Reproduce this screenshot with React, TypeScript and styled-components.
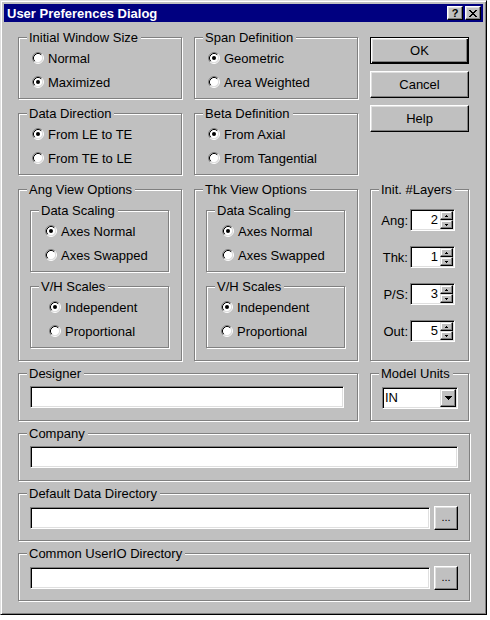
import styled, { createGlobalStyle } from "styled-components";

const GlobalStyle = createGlobalStyle`
  html, body {
    margin: 0;
    padding: 0;
    background: #fff;
  }
  body {
    font-family: "Liberation Sans", Arial, sans-serif;
    font-size: 13px;
    color: #000;
  }
`;

const Window = styled.div`
  width: 487px;
  box-sizing: border-box;
  background: #c0c0c0;
  border: 1px solid;
  border-color: #dfdfdf #000 #000 #dfdfdf;
  box-shadow: inset 1px 1px #fff, inset -1px -1px #808080;
  padding: 3px;
`;

const TitleBar = styled.div`
  height: 18px;
  background: #000080;
  display: flex;
  align-items: center;
  padding: 0 2px 0 3px;
  color: #fff;
`;

const TitleText = styled.span`
  font-weight: bold;
  font-size: 13px;
`;

const TitleButtons = styled.div`
  margin-left: auto;
  display: flex;
  gap: 2px;
`;

const TitleButton = styled.div`
  width: 16px;
  height: 14px;
  box-sizing: border-box;
  background: #c0c0c0;
  border: 1px solid;
  border-color: #fff #000 #000 #fff;
  box-shadow: inset -1px -1px #808080, inset 1px 1px #dfdfdf;
  display: flex;
  align-items: center;
  justify-content: center;
  color: #000;
  font-weight: bold;
  font-size: 11px;
  line-height: 1;
`;

const Body = styled.div`
  padding: 15px 13px 10px 14px;
  display: flex;
  flex-direction: column;
  gap: 12px;
`;

const TopGrid = styled.div`
  display: grid;
  grid-template-columns: 164px 164px 99px;
  grid-template-rows: 62px 62px 172px;
  column-gap: 12px;
  row-gap: 14px;
`;

const Frame = styled.div<{ $height?: number }>`
  border: 1px solid #808080;
  box-shadow: inset 1px 1px #fff, 1px 1px #fff;
  display: flex;
  flex-direction: column;
  min-width: 0;
  ${(p) => (p.$height ? `height: ${p.$height}px; box-sizing: border-box;` : "")}
`;

const InnerFrame = styled(Frame)<{ $top: number }>`
  margin: ${(p) => p.$top}px 12px 0 11px;
`;

const Caption = styled.div`
  align-self: flex-start;
  margin: -8px 0 0 8px;
  padding: 0 3px 0 2px;
  height: 15px;
  line-height: 15px;
  background: #c0c0c0;
  white-space: nowrap;
`;

const Options = styled.div`
  margin-top: 1px;
  display: flex;
  flex-direction: column;
`;

const Option = styled.div<{ $indent: number }>`
  display: flex;
  align-items: center;
  gap: 4px;
  height: 24px;
  padding-left: ${(p) => p.$indent}px;
  white-space: nowrap;
`;

const RadioSvg = styled.svg`
  display: block;
  flex-shrink: 0;
`;

const ButtonStack = styled.div`
  grid-row: span 2;
  align-self: start;
  display: flex;
  flex-direction: column;
  gap: 7px;
`;

const DialogButton = styled.div<{ $default?: boolean }>`
  height: 27px;
  box-sizing: border-box;
  display: flex;
  align-items: center;
  justify-content: center;
  border: 1px solid;
  border-color: ${(p) => (p.$default ? "#000" : "#fff #000 #000 #fff")};
  box-shadow: ${(p) =>
    p.$default
      ? "inset 1px 1px #fff, inset -1px -1px #000, inset -2px -2px #808080, inset 2px 2px #dfdfdf"
      : "inset -1px -1px #808080, inset 1px 1px #dfdfdf"};
`;

const SpinList = styled.div`
  margin-top: 12px;
  display: flex;
  flex-direction: column;
  gap: 15px;
`;

const SpinRow = styled.div`
  display: flex;
  align-items: center;
  justify-content: flex-end;
  gap: 2px;
  padding-right: 13px;
`;

const Sunken = styled.div`
  box-sizing: border-box;
  height: 22px;
  background: #fff;
  border: 1px solid;
  border-color: #808080 #fff #fff #808080;
  box-shadow: inset 1px 1px #000, inset -1px -1px #dfdfdf;
  padding: 1px;
  display: flex;
`;

const SpinBox = styled(Sunken)`
  width: 45px;
`;

const SpinValue = styled.div`
  flex: 1;
  text-align: right;
  line-height: 18px;
  padding-right: 2px;
`;

const SpinButtons = styled.div`
  width: 13px;
  display: flex;
  flex-direction: column;
`;

const SmallButton = styled.div`
  flex: 1;
  box-sizing: border-box;
  background: #c0c0c0;
  border: 1px solid;
  border-color: #dfdfdf #000 #000 #dfdfdf;
  box-shadow: inset -1px -1px #808080, inset 1px 1px #fff;
  display: flex;
  align-items: center;
  justify-content: center;
`;

const FieldRow = styled.div`
  margin-top: 5px;
  display: flex;
  align-items: center;
  gap: 4px;
  padding: 0 11px 0 11px;
`;

const TextField = styled(Sunken)`
  flex: 1;
`;

const BrowseButton = styled.div`
  width: 24px;
  height: 24px;
  box-sizing: border-box;
  border: 1px solid;
  border-color: #fff #000 #000 #fff;
  box-shadow: inset -1px -1px #808080, inset 1px 1px #dfdfdf;
  display: flex;
  align-items: center;
  justify-content: center;
  font-size: 11px;
  padding-bottom: 2px;
`;

const ComboBox = styled(Sunken)`
  width: 76px;
  margin: 6px 0 0 11px;
`;

const ComboText = styled.div`
  flex: 1;
  line-height: 18px;
  padding-left: 1px;
`;

const ComboButton = styled(SmallButton)`
  flex: none;
  width: 16px;
  height: 18px;
`;

const DesignerRow = styled.div`
  display: grid;
  grid-template-columns: 340px 99px;
  column-gap: 12px;
`;

const Radio = ({ label, checked, indent = 13 }: { label: string; checked?: boolean; indent?: number }) => (
  <Option $indent={indent}>
    <RadioSvg width="12" height="12" viewBox="0 0 12 12">
      <circle cx="6" cy="6" r="4.5" fill="#fff" />
      <path d="M2.11 9.89A5.5 5.5 0 0 1 9.89 2.11" stroke="#808080" fill="none" />
      <path d="M9.89 2.11A5.5 5.5 0 0 1 2.11 9.89" stroke="#fff" fill="none" />
      <path d="M2.82 9.18A4.5 4.5 0 0 1 9.18 2.82" stroke="#000" fill="none" />
      <path d="M9.18 2.82A4.5 4.5 0 0 1 2.82 9.18" stroke="#dfdfdf" fill="none" />
      {checked && <circle cx="6" cy="6" r="2" fill="#000" />}
    </RadioSvg>
    {label}
  </Option>
);

const Spinner = ({ label, value }: { label: string; value: number }) => (
  <SpinRow>
    {label}
    <SpinBox>
      <SpinValue>{value}</SpinValue>
      <SpinButtons>
        <SmallButton>
          <svg width="3" height="2" viewBox="0 0 3 2">
            <path d="M1 0h1v1H1zM0 1h3v1H0z" fill="#000" />
          </svg>
        </SmallButton>
        <SmallButton>
          <svg width="3" height="2" viewBox="0 0 3 2">
            <path d="M0 0h3v1H0zM1 1h1v1H1z" fill="#000" />
          </svg>
        </SmallButton>
      </SpinButtons>
    </SpinBox>
  </SpinRow>
);

export default function App() {
  return (
    <>
      <GlobalStyle />
      <Window>
        <TitleBar>
          <TitleText>User Preferences Dialog</TitleText>
          <TitleButtons>
            <TitleButton>?</TitleButton>
            <TitleButton>
              <svg width="8" height="7" viewBox="0 0 8 7">
                <path
                  d="M0 0h2v1H0zM6 0h2v1H6zM1 1h2v1H1zM5 1h2v1H5zM2 2h4v1H2zM3 3h2v1H3zM2 4h4v1H2zM1 5h2v1H1zM5 5h2v1H5zM0 6h2v1H0zM6 6h2v1H6z"
                  fill="#000"
                />
              </svg>
            </TitleButton>
          </TitleButtons>
        </TitleBar>
        <Body>
          <TopGrid>
            <Frame>
              <Caption>Initial Window Size</Caption>
              <Options>
                <Radio label="Normal" />
                <Radio label="Maximized" checked />
              </Options>
            </Frame>
            <Frame>
              <Caption>Span Definition</Caption>
              <Options>
                <Radio label="Geometric" checked />
                <Radio label="Area Weighted" />
              </Options>
            </Frame>
            <ButtonStack>
              <DialogButton $default>OK</DialogButton>
              <DialogButton>Cancel</DialogButton>
              <DialogButton>Help</DialogButton>
            </ButtonStack>
            <Frame>
              <Caption>Data Direction</Caption>
              <Options>
                <Radio label="From LE to TE" checked />
                <Radio label="From TE to LE" />
              </Options>
            </Frame>
            <Frame>
              <Caption>Beta Definition</Caption>
              <Options>
                <Radio label="From Axial" checked />
                <Radio label="From Tangential" />
              </Options>
            </Frame>

            <Frame>
              <Caption>Ang View Options</Caption>
              <InnerFrame $top={13} $height={62}>
                <Caption>Data Scaling</Caption>
                <Options>
                  <Radio label="Axes Normal" checked indent={14} />
                  <Radio label="Axes Swapped" indent={14} />
                </Options>
              </InnerFrame>
              <InnerFrame $top={14} $height={62}>
                <Caption>V/H Scales</Caption>
                <Options>
                  <Radio label="Independent" checked indent={18} />
                  <Radio label="Proportional" indent={18} />
                </Options>
              </InnerFrame>
            </Frame>
            <Frame>
              <Caption>Thk View Options</Caption>
              <InnerFrame $top={13} $height={62}>
                <Caption>Data Scaling</Caption>
                <Options>
                  <Radio label="Axes Normal" checked indent={15} />
                  <Radio label="Axes Swapped" indent={15} />
                </Options>
              </InnerFrame>
              <InnerFrame $top={14} $height={62}>
                <Caption>V/H Scales</Caption>
                <Options>
                  <Radio label="Independent" checked indent={14} />
                  <Radio label="Proportional" indent={14} />
                </Options>
              </InnerFrame>
            </Frame>
            <Frame>
              <Caption>Init. #Layers</Caption>
              <SpinList>
                <Spinner label="Ang:" value={2} />
                <Spinner label="Thk:" value={1} />
                <Spinner label="P/S:" value={3} />
                <Spinner label="Out:" value={5} />
              </SpinList>
            </Frame>
          </TopGrid>

          <DesignerRow>
            <Frame $height={48}>
              <Caption>Designer</Caption>
              <FieldRow style={{ paddingRight: 13 }}>
                <TextField />
              </FieldRow>
            </Frame>
            <Frame $height={48}>
              <Caption>Model Units</Caption>
              <ComboBox>
                <ComboText>IN</ComboText>
                <ComboButton>
                  <svg width="7" height="4" viewBox="0 0 7 4">
                    <path d="M0 0h7v1H0zM1 1h5v1H1zM2 2h3v1H2zM3 3h1v1H3z" fill="#000" />
                  </svg>
                </ComboButton>
              </ComboBox>
            </Frame>
          </DesignerRow>

          <Frame $height={48}>
            <Caption>Company</Caption>
            <FieldRow>
              <TextField />
            </FieldRow>
          </Frame>
          <Frame $height={48}>
            <Caption>Default Data Directory</Caption>
            <FieldRow>
              <TextField />
              <BrowseButton>...</BrowseButton>
            </FieldRow>
          </Frame>
          <Frame $height={48}>
            <Caption>Common UserIO Directory</Caption>
            <FieldRow>
              <TextField />
              <BrowseButton>...</BrowseButton>
            </FieldRow>
          </Frame>
        </Body>
      </Window>
    </>
  );
}
